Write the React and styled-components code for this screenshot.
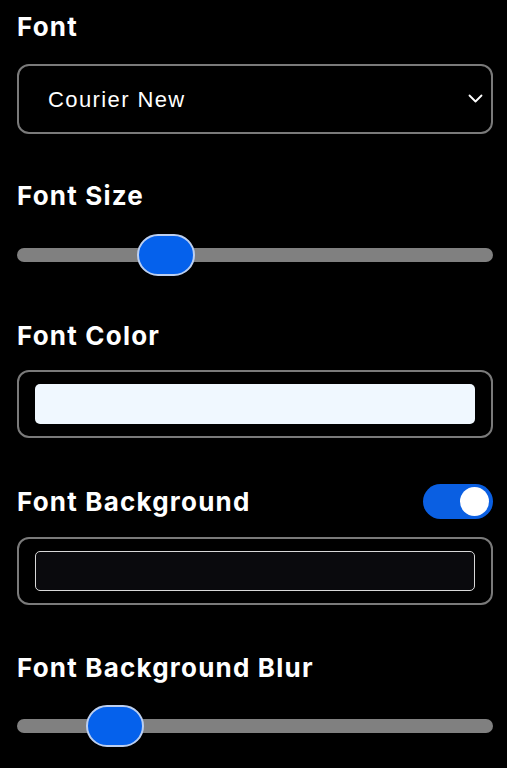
import React from 'react';
import styled, {createGlobalStyle} from "styled-components";

const GlobalStyle = createGlobalStyle`
    html, body {
        margin: 0;
        padding: 0;
        background-color: #000;
    }
`;

const Panel = styled.div`
    display: flex;
    flex-direction: column;
    padding: 11px 14px 0 17px;
    font-family: Inter, "Noto Sans", sans-serif;
    color: #fff;
`;

const Section = styled.div`
    display: flex;
    flex-direction: column;
    margin-top: ${props => props.space || 0}px;
    gap: ${props => props.gap || 20}px;
`;

const Heading = styled.div`
    font-size: 26px;
    font-weight: 700;
    line-height: 32px;
    letter-spacing: 1.2px;
`;

const HeadingRow = styled.div`
    display: flex;
    align-items: center;
    justify-content: space-between;
    height: 35px;
`;

const SelectWrap = styled.div`
    position: relative;
`;

const Select = styled.select`
    appearance: none;
    width: 100%;
    height: 70px;
    box-sizing: border-box;
    padding: 0 40px 0 29px;
    border: 2.5px solid #7a7a7a;
    border-radius: 12px;
    background-color: #000;
    color: #fff;
    font-family: "Liberation Sans", Arial, sans-serif;
    font-size: 22px;
    letter-spacing: 1.4px;
    outline: none;
`;

const Chevron = styled.svg`
    position: absolute;
    right: 10px;
    top: 50%;
    margin-top: -5px;
    pointer-events: none;
`;

const Range = styled.input`
    appearance: none;
    -webkit-appearance: none;
    display: block;
    width: 100%;
    height: 42px;
    margin: 0;
    background: transparent;

    &::-webkit-slider-runnable-track {
        height: 14px;
        border-radius: 7px;
        background: #808080;
    }

    &::-webkit-slider-thumb {
        -webkit-appearance: none;
        width: 58px;
        height: 42px;
        margin-top: -14px;
        box-sizing: border-box;
        border-radius: 21px;
        border: 2.5px solid #bccff0;
        background: #0561ec;
    }
`;

const ColorField = styled.div`
    box-sizing: border-box;
    height: 68px;
    padding: 12px 16px;
    border: 2.5px solid #7a7a7a;
    border-radius: 12px;
`;

const Swatch = styled.div`
    box-sizing: border-box;
    height: 100%;
    border-radius: 5px;
    background-color: ${props => props.color};
    border: ${props => props.outlined ? '1px solid #d8d8d8' : 'none'};
`;

const Toggle = styled.div`
    display: flex;
    align-items: center;
    justify-content: ${props => props.on ? 'flex-end' : 'flex-start'};
    width: 70px;
    height: 35px;
    box-sizing: border-box;
    padding: 0 4px;
    border-radius: 18px;
    background-color: ${props => props.on ? '#0a5fe2' : '#555'};
`;

const Knob = styled.div`
    width: 29px;
    height: 29px;
    border-radius: 50%;
    background-color: #fff;
`;

const App = () => {
    return (
        <>
            <GlobalStyle/>
            <Panel>
                <Section gap={21}>
                    <Heading>Font</Heading>
                    <SelectWrap>
                        <Select defaultValue="Courier New">
                            <option>Arial</option>
                            <option>Courier New</option>
                            <option>Georgia</option>
                            <option>Times New Roman</option>
                            <option>Verdana</option>
                        </Select>
                        <Chevron width="15" height="9" viewBox="0 0 15 9">
                            <path d="M1.5 1.5 L7.5 7.5 L13.5 1.5" fill="none" stroke="#fff" strokeWidth="1.8"
                                  strokeLinecap="round" strokeLinejoin="round"/>
                        </Chevron>
                    </SelectWrap>
                </Section>

                <Section space={46} gap={22}>
                    <Heading>Font Size</Heading>
                    <Range type="range" min="0" max="418" defaultValue="120"/>
                </Section>

                <Section space={44} gap={18}>
                    <Heading>Font Color</Heading>
                    <ColorField>
                        <Swatch color="#f0f8ff"/>
                    </ColorField>
                </Section>

                <Section space={46} gap={18}>
                    <HeadingRow>
                        <Heading>Font Background</Heading>
                        <Toggle on>
                            <Knob/>
                        </Toggle>
                    </HeadingRow>
                    <ColorField>
                        <Swatch color="#0a0a0d" outlined/>
                    </ColorField>
                </Section>

                <Section space={47} gap={21}>
                    <Heading>Font Background Blur</Heading>
                    <Range type="range" min="0" max="418" defaultValue="69"/>
                </Section>
            </Panel>
        </>
    );
};

export default App;
